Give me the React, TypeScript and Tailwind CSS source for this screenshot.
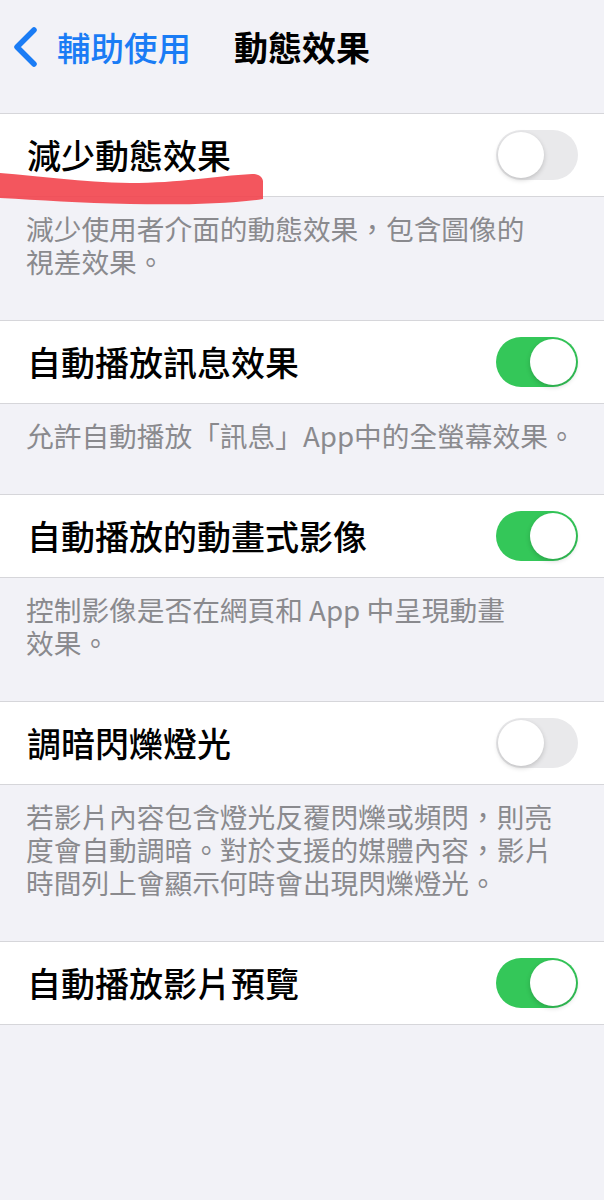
const FONT = { fontFamily: '"Noto Sans CJK TC", "Noto Sans", sans-serif' };

type Item = { title: string; on: boolean; desc?: string[] };

const items: Item[] = [
  { title: '減少動態效果', on: false, desc: ['減少使用者介面的動態效果，包含圖像的', '視差效果。'] },
  { title: '自動播放訊息效果', on: true, desc: ['允許自動播放「訊息」App中的全螢幕效果。'] },
  { title: '自動播放的動畫式影像', on: true, desc: ['控制影像是否在網頁和 App 中呈現動畫', '效果。'] },
  {
    title: '調暗閃爍燈光',
    on: false,
    desc: ['若影片內容包含燈光反覆閃爍或頻閃，則亮', '度會自動調暗。對於支援的媒體內容，影片', '時間列上會顯示何時會出現閃爍燈光。'],
  },
  { title: '自動播放影片預覽', on: true },
];

function Toggle({ on }: { on: boolean }) {
  return (
    <div
      className={
        'w-[82px] h-[50px] rounded-full p-[2px] flex ' +
        (on ? 'bg-[#34c759] justify-end' : 'bg-[#e9e9eb] justify-start')
      }
    >
      <div className="w-[46px] h-[46px] rounded-full bg-white shadow-[0_2px_5px_rgba(0,0,0,0.18)]" />
    </div>
  );
}

export default function App() {
  return (
    <div className="min-h-[1200px] w-[604px] bg-[#f2f2f7] relative" style={FONT}>
      <div className="h-[113px] flex items-start pt-[27px]">
        <svg width="40" height="40" viewBox="0 0 40 40" className="ml-[6px]">
          <path d="M28 3 L11 20 L28 37" fill="none" stroke="#1a7cf5" strokeWidth="5.5" strokeLinecap="round" strokeLinejoin="round" />
        </svg>
        <span className="ml-[11px] text-[33.5px] text-[#1a7cf5] font-medium leading-[40px]">輔助使用</span>
        <span className="ml-[43px] text-[34px] text-black font-semibold leading-[40px]">動態效果</span>
      </div>

      {items.map((it) => (
        <div key={it.title}>
          <div className="h-[84px] bg-white border-y border-[#d6d6da] flex items-center justify-between pl-[27px] pr-[26px]">
            <span className="text-[34px] font-medium text-black leading-none">{it.title}</span>
            <Toggle on={it.on} />
          </div>
          {it.desc ? (
            <div className="pt-[15px] pb-[42px] pl-[26px] text-[27.7px] leading-[33px] text-[#8a8a8e] whitespace-nowrap">
              {it.desc.map((l) => (
                <div key={l}>{l}</div>
              ))}
            </div>
          ) : null}
        </div>
      ))}

      <svg className="absolute left-0 top-[168px] pointer-events-none" width="270" height="42" viewBox="0 168 270 42">
        <path
          d="M0 173 C40 176 80 182 130 183 C180 183 215 176 252 174 C258 174 262 176 263 181 L263 199 C230 204 180 205 130 204 C80 203 40 200 0 198 Z"
          fill="#f2444c"
          fillOpacity="0.9"
        />
      </svg>
    </div>
  );
}
